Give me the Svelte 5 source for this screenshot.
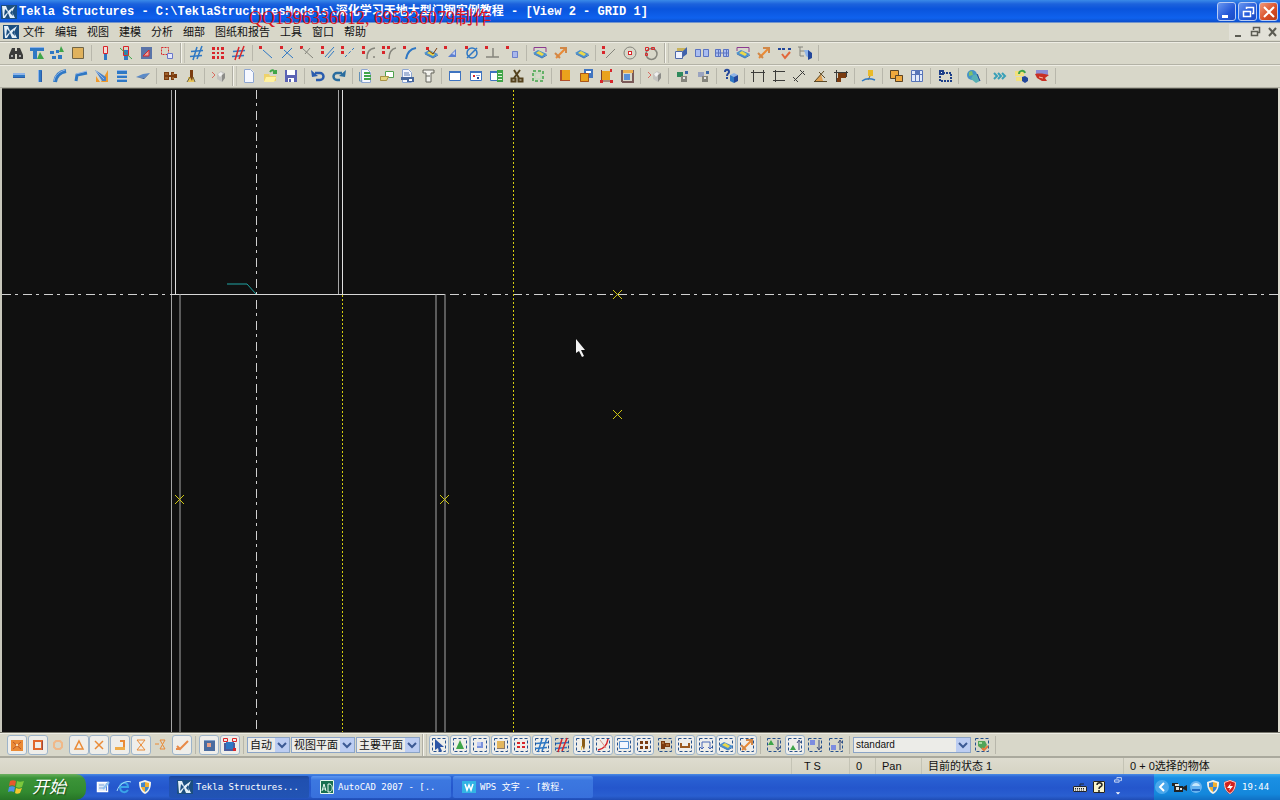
<script>
  // Model editor main window: title bar, menus, icon toolbars, drawing canvas,
  // selection bar, status line and the desktop task bar below.

  const BLUE = "#2f78c4";
  const NAVY = "#23479a";
  const SKY = "#8fb4e8";
  const RED = "#d8262b";
  const ORANGE = "#ea8a35";
  const BROWN = "#7a3c10";
  const GREEN = "#3fa548";
  const GREY = "#85857c";
  const DARK = "#3c3c3a";
  const YELLOW = "#ecd84a";

  // One shape is { d, fill } or { d, stroke, w, dash }, on a 16x16 grid.
  const f = (fill, d) => ({ d, fill });
  const s = (stroke, d, w = 1, dash = null) => ({ d, stroke, w, dash });

  const twoDots = f(RED, "M1 1h3v3H1zM1 6h3v3H1z");
  const oneDot = f(RED, "M1 1h3v3H1z");
  const plane = [f("#4a90d0", "M1 8l5-3 9 4-5 4z"), f(YELLOW, "M4 8l3-2 5 3-2 2z"), s("#3c78b8", "M2 9l8 4 5-3", 1)];
  const hammer = [s(ORANGE, "M3 13L12 4", 2), s("#d08848", "M7 3h6v5M2 8l5 5", 2)];
  const grid = (c) => [s(BLUE, "M2 6.5l12-1M1 11.5l12-1", 1.5), s(c, "M8 2L4 15M13 1L8 14", 1.5)];
  const page = [f("#f6f8ff", "M3 1h7l3 3v11H3z"), s("#8ea6d0", "M3.5 1.5h6l3 3v10h-9z")];
  const windowBox = [f("#fff", "M2 3h12v10H2z"), s("#3f74c0", "M2.5 3.5h11v9h-11z"), f("#3f74c0", "M2 3h12v2H2z")];
  const gear = [f("#c4c4c0", "M6 6l4-3 4 2v5l-3 4-5-3z"), f("#f0f0ee", "M7 6l3-2 2 2-3 3z"), f("#8c8c88", "M11 7l3-2v5l-3 4z"), s("#d86a60", "M1 4l3 3-3 3")];
  const nuts = (c) => [f(c, "M3 4h6v5H3z"), f(GREY, "M7 8h6v6H7z"), f("#3c68a8", "M11 3h3v3h-3z"), f("#e8e8e8", "M9 9h2v2H9z")];
  const frame = s("#24518e", "M1.5 1.5h13v13h-13z", 1, "3 2");
  const arrow = (up) => s("#3c4c7c", up ? "M12 13V4M10 6l2-3 2 3" : "M12 3v9M10 10l2 3 2-3");

  const icons = {
    binoculars: [f(DARK, "M4 3h3v3h2V3h3l3 7v4H9V9H7v5H1v-4z"), f("#aaa", "M3 10h2v2H3zM11 10h2v2h-2z")],
    beams: [f(BLUE, "M1 2h14v4H1zM4 6h4v8H4z"), f(SKY, "M1 2h14v1H1z"), f(GREEN, "M11 7l4 7H8z")],
    bolts: [f(BLUE, "M1 6h4v3H1zM7 5h3v3H7zM3 11h4v3H3zM9 10h4v4H9z"), f(GREEN, "M12 1l3 6H10z")],
    panel: [f("#e0b25c", "M2 2h11v11H2z"), s("#6f6446", "M2.5 2.5h11v11h-11z")],
    column: [f("#f4dcd8", "M6 1h4v8H6z"), s(RED, "M6.5 1.5h4v7h-4z"), f(BLUE, "M7 9h3v6H7z")],
    columnCut: [f(BLUE, "M6 5h4v10H6z"), s(RED, "M5.5 1.5h5v9h-5z"), s(GREEN, "M2 3l12 11", 1)],
    ramp: [f("#5a74a8", "M3 2h11v12H3z"), f("#e8a098", "M5 11l6-6v6z"), s(RED, "M5 11l6-6v6z")],
    fit: [s(RED, "M2.5 2.5h7v7h-7z", 1, "2 1"), f("#e4e6fa", "M8 8h6v5H8z"), s("#6a78c8", "M8.5 8.5h5v5h-5z")],
    grid: grid(BLUE),
    gridRed: grid(RED),
    nine: [f(RED, "M2 2h3v3H2zM7 2h2v3H7zM11 2h3v3h-3zM2 7h3v2H2zM7 7h2v2H7zM11 7h3v2h-3zM2 11h3v3H2zM7 11h2v3H7zM11 11h3v3h-3z")],
    pLine: [oneDot, s(BLUE, "M5 5l9 8", 1)],
    pCross: [oneDot, s(BLUE, "M3 13L13 3M5 5l9 8")],
    pMid: [oneDot, s(GREY, "M3 3l11 10M11 3l-5 6")],
    pDouble: [twoDots, s(BLUE, "M5 12l9-10M8 13l6-7")],
    pDash: [twoDots, s(BLUE, "M5 12l9-9", 1, "3 2")],
    pArc: [twoDots, s(GREY, "M14 3C8 4 6 7 6 14M12 12h2", 1.5)],
    pArcs: [twoDots, f(RED, "M6 1h3v3H6z"), s(GREY, "M15 3C10 4 8 8 8 14", 1.5)],
    pCurve: [oneDot, s(BLUE, "M14 3C8 4 5 8 4 14", 2)],
    pPlane: [...plane, f(RED, "M3 2h3v3H3z"), s(BROWN, "M5 5l5 4 4-6")],
    pTri: [oneDot, f("#5c7fd0", "M5 12l8-8v8z"), f("#c4d0f4", "M9 9l3-3v4z")],
    pCircle: [s(BLUE, "M3 8a5 5 0 1 0 10 0a5 5 0 1 0-10 0M3 13L13 3", 1.5), oneDot],
    pAngle: [s(GREY, "M9 3v9M2 12h13", 1.5), oneDot],
    pCube: [oneDot, f("#a9b7ec", "M7 6h6v7H7z"), s("#6d80c8", "M7.5 6.5h5v6h-5z")],
    planeTop: [...plane, s("#8c3a90", "M2 6V2.5h12V7")],
    hammer,
    plane,
    dotLine: [twoDots, s(GREY, "M5 13L14 4")],
    target: [s(GREY, "M2 8a6 6 0 1 0 12 0a6 6 0 1 0-12 0", 1), f(RED, "M6 6h4v4H6z"), f("#fff", "M7 7h2v2H7z")],
    circle: [s(GREY, "M3 9a5 5 0 1 0 11 0a5 5 0 1 0-11 0", 1.5), s(RED, "M2.5 2.5h3v3h-3zM8.5 2.5h3v2h-3zM2.5 8.5h2v2h-2z")],
    box3d: [f("#eef2ff", "M2 6h7v8H2z"), s("#4d68a8", "M2.5 6.5h7v7h-7z"), f("#c8b35c", "M4 3h10l-3 3H4z"), f("#3f62ac", "M10 6l4-4v7l-4 3z")],
    panes: [f("#a9bdf0", "M1 4h6v8H1zM9 4h6v8H9z"), s("#5c74c0", "M1.5 4.5h5v7h-5zM9.5 4.5h5v7h-5z")],
    panes4: [f("#a9bdf0", "M1 4h6v8H1zM9 4h6v8H9z"), s("#5c74c0", "M1.5 4.5h5v7h-5zM9.5 4.5h5v7h-5zM1 8h14M4.5 4v8M12.5 4v8")],
    check: [f(NAVY, "M2 3h3v2H2zM6 3h3v2H6zM12 3h3v2h-3z"), s("#e2683c", "M6 9l3 4 5-6", 2)],
    tree: [s(GREY, "M3 2v9h4M3 6h6M1 2h5"), f(SKY, "M7 5h5v8l-3-2z"), f(NAVY, "M11 5l4 3v5l-4 2z")],

    beam: [f(BLUE, "M2 6h12v4H2z"), f(SKY, "M2 5h12v2H2z"), f("#2a5ca8", "M2 9h12v1H2z")],
    post: [f(BLUE, "M6 2h4v12H6z"), f(SKY, "M6 2h1v12H6z"), f("#2a5ca8", "M9 3h1v11H9z")],
    curved: [s(BLUE, "M3 14C4 7 8 4 14 3", 4), s(SKY, "M2 13C3 7 7 4 13 2", 1)],
    poly: [s(BLUE, "M3 13l1-6 10-2", 3), s(SKY, "M3 6l11-3", 1)],
    plateOr: [f("#ef9a2c", "M7 14L14 2v12zM2 8l4 6H2z"), f("#4b82c8", "M1 2l5 3 6 4v4H8z"), s(SKY, "M2 3l8 8", 1)],
    stack: [f(BLUE, "M3 2h10v4H3zM3 7h10v3H3zM3 11h10v3H3z"), s(SKY, "M3 2.5h10M3 7.5h10M3 11.5h10")],
    slab: [f("#5a8ac8", "M1 9l7-3 7-1-6 5z"), f("#2c5090", "M1 9l8 1 6-5-6 6z")],
    bolt: [f(BROWN, "M2 4h5v8H2zM9 4h3v8H9zM7 7h2v2H7zM12 6h3v4h-3z"), s("#c88a4c", "M3 6h3M3 10h3M10 6h2M10 10h2")],
    weld: [f("#e8c65a", "M5 9h6v5H5z"), f(BROWN, "M7 2h3v7l-1 4-2-4z"), s("#6b6040", "M4 14l3-5M12 14l-2-5")],
    gear,
    pageNew: page,
    open: [f("#eed26c", "M2 6h5l1 2h6v5H2z"), f("#fff2a0", "M4 9h10l-2 5H2z"), s(GREEN, "M8 4c2-3 4-2 5 1M11 5h3V2", 2)],
    save: [f("#5b63b4", "M2 2h12v12H2z"), f("#fff", "M4 2h8v5H4zM5 10h6v4H5z"), f("#5b63b4", "M6 11h2v3H6z")],
    undo: [s("#2a5cae", "M5 5h5a3 3 0 0 1 0 7H6", 2.5), f("#2a5cae", "M1 2l1 7 6-1z")],
    redo: [s("#2a6c9e", "M11 5H6a3 3 0 0 0 0 7h3", 2.5), f("#2a6c9e", "M15 2l-1 7-6-1z")],
    report: [...page, s(GREEN, "M6 5h6M6 8h7M6 11h7", 2), s("#6290b8", "M1.5 4v9h3")],
    folder: [f("#fff", "M6 3h9v6H6z"), s("#4fa04d", "M6.5 3.5h8v6h-8z"), f("#e5d47c", "M1 8h9l-2 5H1z"), s("#a89348", "M1.5 8.5h8l-2 4h-6z")],
    print: [...page, s("#5a7ab0", "M5 5h5M5 7h6"), f("#48689c", "M2 9h8v3H2zM8 9h7v5H8z"), f("#fff", "M10 11h3v2h-3z")],
    scroll: [f("#f3f3ee", "M4 2h10l-3 3v9H6V6H3z"), s("#66665e", "M3 5V2h11v3h-3v9H6V5zM6 8h4")],
    win1: windowBox,
    win2: [...windowBox, f(RED, "M5 7h2v2H5z"), f(NAVY, "M9 9h2v2H9z"), s("#8fa8d8", "M8 7.5h4")],
    win3: [...windowBox, f(GREEN, "M9 2h6v12H9z"), s("#e4f4dc", "M10 5.5h4M10 8.5h4M10 11.5h4")],
    cut: [s("#55421c", "M5 2l5 8M11 2L5 10", 2), s("#55421c", "M2.5 10.5h4v3h-4zM9.5 10.5h4v3h-4z", 2)],
    crop: [s(GREEN, "M3 3h10v10H3z", 1.5, "3 2"), s("#b4dcb0", "M5 5h6v6H5z")],
    sq1: [f("#eaa21c", "M3 2h10v11H3z"), f("#b0502c", "M3 2h2v11H3zM3 12h10v1H3z")],
    sq2: [f("#3f74c0", "M6 1h9v9H6z"), f("#eaa21c", "M2 5h9v9H2z"), s("#a8581c", "M2.5 5.5h8v8h-8z"), f("#fff", "M8 3h5v2H8z")],
    sq3: [f("#eaa21c", "M4 3h8v9H4z"), s("#7c4030", "M3.5 2v11h10"), f(RED, "M2 12h3v3H2zM12 12h3v3h-3zM12 1h2v3h-2z")],
    sq4: [s("#7a5a58", "M3 14V3h11v11H3", 2), f("#ecb050", "M4 2h10v3H4z"), f("#5a90d8", "M5 6h6v6H5z")],
    nuts1: nuts("#2f8a5c"),
    nuts2: nuts("#9aa4c0"),
    help: [s(NAVY, "M2 4c0-3 4-3 4 0c0 2-2 1-2 4M4 9v2", 2), f(SKY, "M7 7l4-2 4 2-4 2z"), f(BLUE, "M7 7l4 2v6l-4-2z"), f(NAVY, "M11 9l4-2v6l-4 2z")],
    dimH: [s(DARK, "M3.5 2v12M13.5 2v12M1 4.5h14")],
    dimV: [s(DARK, "M2 3.5h12M2 12.5h12M4.5 2v12")],
    dimD: [s(DARK, "M3 13L13 3M2 9l5 5M9 2l5 5")],
    dimA: [f("#e0a050", "M3 13l6-7 2 7z"), s("#5b4a28", "M2 13.5h13M3 13l9-10M7 4l6 6")],
    dimC: [f(BROWN, "M5 5h8v5H5zM4 10h4v4H4z"), s(DARK, "M3.5 2v12M1 4.5h14M13.5 3v6")],
    pin: [f("#eaba28", "M7 2h5v6H7z"), s("#8a6d20", "M9 8l-2 4"), s(BLUE, "M1 13c4-3 8-3 13-1", 1.5)],
    copy: [f("#f0a83c", "M2 2h8v8H2z"), s("#5a4528", "M2.5 2.5h8v8h-8z"), f("#f0a83c", "M7 7h8v7H7z"), s("#5a4528", "M7.5 7.5h7v6h-7z")],
    table: [f("#dfe8fa", "M2 2h12v12H2z"), s("#5674b8", "M2.5 2.5h11v11h-11zM2 6.5h12M6.5 2v12M10.5 2v12"), f("#5674b8", "M7 2h4v4H7z")],
    marquee: [s("#1d3f88", "M3 5h11v8H3z", 2, "2 1"), f("#1d3f88", "M2 2h5v5H2z"), f("#fff", "M4 4h1v1H4z")],
    globe: [f("#4594c8", "M2 7a5 5 0 1 1 10 0a5 5 0 1 1-10 0"), f("#7fc06a", "M4 4l3-1 1 4-4 1z"), f("#58b0b4", "M8 7l5-1 2 7-4 2-5-4z"), s(NAVY, "M12 6l3 7", 1)],
    chevrons: [s("#39a0b8", "M2 5l3 3-3 3M6 5l3 3-3 3M10 5l3 3-3 3", 2)],
    export: [f("#f2e07c", "M2 3h9v5H2zM3 9h6v4H3z"), s(GREEN, "M6 6c0-4 5-4 6-1", 2), f(NAVY, "M9 9l3-1 3 2v3l-3 2-3-2z")],
    flag: [f("#8d8ed4", "M2 2h12v5H2z"), f("#c83024", "M1 6c5-1 10 0 14 1l-4 3 2 3H8L3 10z"), s("#f4c0b0", "M5 9l4 1")],

    snapAll: [f(ORANGE, "M2 3h12v11H2z"), s("#b8582c", "M4 5l8 7M12 5l-8 7"), f("#f8d8b0", "M7 7h2v2H7z")],
    snapEnd: [s("#e2672c", "M4 4h8v8H4z", 2), s("#9c4a40", "M12.5 4v9")],
    snapOct: [s("#f0b888", "M6 4h4l2 2v4l-2 2H6l-2-2V6z", 2)],
    snapTri: [s(ORANGE, "M8 4l4 8H4z", 1.5)],
    snapX: [s(ORANGE, "M4 4l8 8M12 4l-8 8", 1.5)],
    snapPerp: [s(ORANGE, "M8 4h4v8", 2), f("#f0ac48", "M3 10h10v3H3z")],
    snapHour: [s(ORANGE, "M4 3h8l-8 10h8L4 3z", 1)],
    snapNear: [s(ORANGE, "M7 3h5L7 12h5L7 3zM2 7h4", 1)],
    snapCheck: [s("#e88a48", "M3 9l3 3 8-8M2 12h4", 2)],
    snapRef: [f("#4a6ca0", "M3 3h11v11H3z"), f("#86a4cc", "M3 3h11v1H3z"), f("#e8a088", "M6 6h4v4H6z")],
    snapGeo: [f(BLUE, "M4 5h8v7H4z"), s(RED, "M1.5 1.5h4v3h-4zM10.5 1.5h4v3h-4z"), s("#4a5c9c", "M3 6v7h9V6", 2), f(RED, "M11 11h3v3h-3z")],

    selArrow: [frame, f("#2d55a5", "M4 2l9 8H9l2 4-3 1-1-4-3 2z")],
    selComp: [frame, f(GREEN, "M8 3l4 9H4z")],
    selPart: [frame, f("#7b92dc", "M5 5h6v6H5z"), f("#bcc8f4", "M5 5h4v4H5z")],
    selSurf: [frame, f("#e3b65c", "M4 4h8v8H4z"), s("#8c7868", "M4 11.5h8M11.5 4v8", 1)],
    selPts: [frame, f(RED, "M4 5h3v2H4zM9 5h3v2H9zM4 9h3v2H4zM9 9h3v2H9z")],
    selGrid: [frame, ...grid(BLUE)],
    selLine: [frame, ...grid(RED)],
    selWeld: [frame, f("#8a5c18", "M7 2h3v7l-1 4-2-4z"), f("#e8c65a", "M6 9h1v4H6z")],
    selCut: [frame, s(RED, "M3 13C9 12 12 8 13 2", 1.5), s("#d89080", "M5 3l6 8", 1)],
    selView: [frame, s("#5690d0", "M3.5 4.5h9v7h-9z"), f("#f4f8ff", "M4 5h8v6H4z")],
    selBolts: [frame, f(BROWN, "M4 4h3v3H4zM9 4h3v3H9zM4 9h3v3H4zM9 9h3v3H9z")],
    selBolt: [frame, f(BROWN, "M4 4h4v8H4zM8 6h5v4H8z"), s("#d8a060", "M5 6h2M9 8h3")],
    selBar: [frame, s("#9c5a20", "M4 6v4h8V6", 2)],
    selRebar: [frame, s("#4a68b8", "M4 12V5h8v7M2 10l2 2 2-2M10 10l2 2 2-2")],
    selPlane: [frame, ...plane],
    selDist: [frame, ...hammer],
    asm1: [frame, f(GREEN, "M5 3l3 5H2z"), arrow(false)],
    asm2: [frame, f(GREEN, "M6 8l3 5H3z"), arrow(true)],
    asm3: [frame, f("#7d8ce0", "M3 3h5v5H3z"), arrow(false)],
    asm4: [frame, f("#7d8ce0", "M3 8h5v5H3z"), arrow(true)],
    filter: [frame, f("#52a458", "M4 4h7l2 4-4 5-5-4z"), f("#a8dca0", "M5 5h3v2H5z"), s("#e8783c", "M8 11l2 2 4-4", 2)],

    logo: [f("#1c4f80", "M0 1h16v14H0z"), f("#e4f0f8", "M1 2h4l2 5 7-5-3 6 3 6H9L7 9l-3 5H2z"), f("#1c4f80", "M4 5l3 3-4 4zM11 6l1 6-3-3z")],
    desk: [f("#dfe9f7", "M2 4h9v9H2z"), s("#7fa6dc", "M4 6h5M4 9h4"), s("#fff", "M2.5 3.5h10v9h-10z", 1.5), s("#8cc0f0", "M8 10l6-7", 2)],
    ie: [s("#3aa4e8", "M12 11c-3 4-8 2-8-3s8-6 8 0H5", 2), s("#a8dcf8", "M1 12C3 5 10 1 15 3")],
    shield: [f("#f2f2ec", "M8 1l6 2c0 6-2 10-6 12C4 13 2 9 2 3z"), f("#3c84cc", "M8 3v5H4V4zM8 8h4c-1 3-2 4-4 5z"), f("#f0b030", "M8 3l4 1v4H8zM4 8h4v5C6 12 5 10 4 8z")],
    cad: [f("#187050", "M1 1h14v14H1z"), s("#e8f8f0", "M3 12l2-7 2 7M4 10h3M9 5v8h2c3-1 3-7 0-8z", 1), s("#e8f8f0", "M1.5 1.5h13v13h-13z")],
    wps: [f("#32b4e4", "M1 2h14v12H1z"), s("#fff", "M4 5l2 6 2-5 2 5 2-6", 1.5)],
    keyboard: [f("#e8e6da", "M1 7h14v6H1z"), s("#20242c", "M1.5 7.5h13v5h-13zM8 7V5h4", 1), s("#20242c", "M3 9.5h10M3 11h10", 1, "1 1")],
    question: [f("#f8f4cc", "M2 2h12v12H2z"), s("#222", "M2.5 2.5h11v11h-11z"), s("#222", "M6 6c0-3 5-3 5 0c0 2-3 1-3 4M8 11v2", 1.5)],
    back: [f("#4aa8ec", "M1 8a7 7 0 1 1 14 0a7 7 0 1 1-14 0"), s("#fff", "M10 4L6 8l4 4", 2)],
    camera: [f("#222", "M1 4h6v3H1zM3 7h9v6H3zM12 8l4-2v6l-4-2z"), f("#e4e4dc", "M4 5h4v2H4zM5 8h3v3H5zM9 9h2v2H9z")],
    orb: [f("#68b4f0", "M2 8a6 6 0 1 1 12 0a6 6 0 1 1-12 0"), f("#c8e8fc", "M4 7c1-4 7-4 8 0z"), f("#1f68c0", "M4 10h8v2H4z")],
    redShield: [f("#d4201c", "M8 1l6 2c0 6-2 10-6 12C4 13 2 9 2 3z"), s("#f4d8d4", "M8 1.5l5.5 2c0 5-2 9-5.5 11C4 12 2.5 9 2.5 3.500z"), f("#fff", "M9 4L5 9h3l-1 3 4-5H8z")],
    minimize: [f("#fff", "M3 11h6v3H3z")],
    restore: [s("#fff", "M6.5 5V3.5h7v6H12M3.5 7.5h7v5h-7z", 1.5)],
    close: [s("#fff", "M3 3l10 10M13 3L3 13", 2)],
    mdiMin: [f("#5c5c54", "M5 11h6v2H5z")],
    mdiRestore: [s("#5c5c54", "M6.5 6V3.5h6v5H11M4.5 7.5h6v4h-6z", 1.5)],
    mdiClose: [s("#5c5c54", "M5 4l7 8M12 4l-7 8", 2)],
    smallRestore: [s("#fff", "M6.5 5V3.5h6v4H11M3.5 6.5h6v3h-6z")],
    smallDown: [f("#fff", "M5 7h6l-3 3z")],
    chevron: [s("#3c5a94", "M4 6l4 4 4-4", 2)]
  };

  const menus = ["文件", "编辑", "视图", "建模", "分析", "细部", "图纸和报告", "工具", "窗口", "帮助"];

  // "grip" marks a group that starts a separate, draggable toolbar.
  const modelBar = [
    { names: "binoculars beams bolts panel" },
    { names: "column columnCut ramp fit" },
    { grip: true, names: "grid nine gridRed" },
    { names: "pLine pCross pMid pDouble pDash pArc pArcs pCurve pPlane pTri pCircle pAngle pCube" },
    { names: "planeTop hammer plane" },
    { names: "dotLine target circle" },
    { grip: true, names: "box3d panes panes4 planeTop hammer check tree" }
  ];
  const editBar = [
    { names: "beam post curved poly plateOr stack slab" },
    { names: "bolt weld" },
    { names: "gear" },
    { grip: true, names: "pageNew open save" },
    { names: "undo redo" },
    { names: "report folder print scroll" },
    { names: "win1 win2 win3 cut crop" },
    { names: "sq1 sq2 sq3 sq4" },
    { names: "gear" },
    { names: "nuts1 nuts2" },
    { names: "help" },
    { names: "dimH dimV dimD dimA dimC" },
    { names: "pin" },
    { names: "copy table" },
    { names: "marquee" },
    { names: "globe" },
    { names: "chevrons export flag" }
  ];
  const snapBar = "snapAll snapEnd snapOct snapTri snapX snapPerp snapHour snapNear snapCheck";
  const refBar = "snapRef snapGeo";
  const selectBar =
    "selArrow selComp selPart selSurf selPts selGrid selLine selWeld selCut selView selBolts selBolt selBar selRebar selPlane selDist";
  const asmBar = "asm1 asm2 asm3 asm4";

  let pressed = $state(
    new Set([
      ...snapBar.split(" ").filter((n) => n !== "snapOct" && n !== "snapNear"),
      ...refBar.split(" "),
      ...selectBar.split(" ").filter((n) => n !== "selLine" && n !== "selBolt"),
      "asm2"
    ])
  );
  function toggle(name) {
    const next = new Set(pressed);
    if (!next.delete(name)) next.add(name);
    pressed = next;
  }

  const marks = [[617, 206], [617, 326], [179, 411], [444, 411]];
  const tasks = [
    { icon: "logo", label: "Tekla Structures...", active: true },
    { icon: "cad", label: "AutoCAD 2007 - [.." },
    { icon: "wps", label: "WPS 文字 - [教程." }
  ];

  const groupWidth = (n) => Math.round(n * 20.5);
</script>

{#snippet icon(name)}
  <svg class="icon" width="16" height="16" viewBox="0 0 16 16" aria-hidden="true">
    {#each icons[name] as p, i (i)}
      <path d={p.d} fill={p.fill ?? "none"} stroke={p.stroke} stroke-width={p.w} stroke-dasharray={p.dash} />
    {/each}
  </svg>
{/snippet}

{#snippet group(names)}
  {@const list = names.split(" ")}
  <div class="group" style="width:{groupWidth(list.length)}px">
    {#each list as name (name)}
      <button class="tool" aria-label={name}>{@render icon(name)}</button>
    {/each}
  </div>
{/snippet}

{#snippet toggles(names)}
  {@const list = names.split(" ")}
  <div class="group" style="width:{groupWidth(list.length)}px">
    {#each list as name (name)}
      <button class="tool" class:on={pressed.has(name)} aria-label={name} aria-pressed={pressed.has(name)} onclick={() => toggle(name)}>
        {@render icon(name)}
      </button>
    {/each}
  </div>
{/snippet}

{#snippet toolbar(groups, kind)}
  <div class="toolbar {kind}">
    {#each groups as g, i (i)}
      {#if i > 0}<span class={g.grip ? "sep grip" : "sep"}></span>{/if}
      {@render group(g.names)}
    {/each}
    <span class="sep"></span>
  </div>
{/snippet}

{#snippet picker(label, value, size)}
  <span class="picker {size}">
    <select aria-label={label}><option>{value}</option></select>
    <span class="drop">{@render icon("chevron")}</span>
  </span>
{/snippet}

<div class="app">
  <header class="title">
    {@render icon("logo")}
    <h1>Tekla Structures - C:\TeklaStructuresModels\深化学习天地大型门钢实例教程 - [View 2 - GRID 1]</h1>
    <div class="watermark">QQ1396336012, 695336079制作</div>
    <div class="controls">
      <button aria-label="Minimize">{@render icon("minimize")}</button>
      <button aria-label="Restore">{@render icon("restore")}</button>
      <button class="close" aria-label="Close">{@render icon("close")}</button>
    </div>
  </header>

  <nav class="menu">
    {@render icon("logo")}
    {#each menus as m (m)}
      <button class="item">{m}</button>
    {/each}
    <div class="mdi">
      <button aria-label="Minimize view">{@render icon("mdiMin")}</button>
      <button aria-label="Restore view">{@render icon("mdiRestore")}</button>
      <button aria-label="Close view">{@render icon("mdiClose")}</button>
    </div>
  </nav>

  {@render toolbar(modelBar, "model")}
  {@render toolbar(editBar, "edit")}

  <main class="canvas">
    <svg role="img" aria-label="GRID 1">
      <!-- grid axes -->
      <line class="axis" x1="2" y1="206.5" x2="171" y2="206.5" />
      <line class="axis" x1="450" y1="206.5" x2="100%" y2="206.5" />
      <line class="axis" x1="256.5" y1="2" x2="256.5" y2="100%" />
      <line class="limit" x1="513.5" y1="2" x2="513.5" y2="100%" />
      <line class="limit" x1="342.5" y1="207" x2="342.5" y2="100%" />
      <!-- upper column -->
      <line class="edge soft" x1="171.5" y1="2" x2="171.5" y2="100%" />
      <line class="edge" x1="175.5" y1="2" x2="175.5" y2="206" />
      <line class="edge soft" x1="338.5" y1="2" x2="338.5" y2="206" />
      <line class="edge" x1="342.5" y1="2" x2="342.5" y2="206" />
      <!-- lower column -->
      <rect class="cap" x="171" y="206" width="274" height="1" />
      <line class="edge soft" x1="180" y1="206" x2="180" y2="100%" />
      <line class="edge soft" x1="436" y1="206" x2="436" y2="100%" />
      <line class="edge soft" x1="445" y1="206" x2="445" y2="100%" />
      <path class="handle" d="M227 196H247L256 206" />
      {#each marks as [x, y] (`${x},${y}`)}
        <path class="mark" d="M{x - 4} {y - 4}l9 9m0 -9l-9 9" />
      {/each}
      <path class="cursor" d="M576 251v14l3-2 3 6 2-1-3-6h4z" />
    </svg>
  </main>

  <div class="toolbar bottom">
    {@render toggles(snapBar)}
    <span class="sep"></span>
    {@render toggles(refBar)}
    <span class="sep"></span>
    <div class="pickers">
      {@render picker("Plane type", "自动", "small")}
      {@render picker("Plane", "视图平面", "medium")}
      {@render picker("Depth", "主要平面", "medium")}
    </div>
    <span class="sep grip"></span>
    {@render toggles(selectBar)}
    <span class="sep"></span>
    {@render toggles(asmBar)}
    <span class="sep"></span>
    {@render picker("Selection filter", "standard", "large")}
    {@render toggles("filter")}
    <span class="sep"></span>
  </div>

  <footer class="status">
    <span class="cell keys">T S</span>
    <span class="cell level">0</span>
    <span class="cell mode">Pan</span>
    <span class="cell phase">目前的状态 1</span>
    <span class="cell picked">0 + 0选择的物体</span>
  </footer>

  <div class="taskbar">
    <button class="start">
      <svg width="20" height="18" viewBox="0 0 20 18" aria-hidden="true">
        <path d="M3 3c2-1 4-1 6 0L8 8C6 7 4 7 2 8z" fill="#e8582c" />
        <path d="M10 3c2 1 4 1 7 0l-2 6c-2 1-4 1-6 0z" fill="#7cc83c" />
        <path d="M2 9c2-1 4-1 6 0l-1 5c-2-1-4-1-6 0z" fill="#4c90e8" />
        <path d="M9 10c2 1 4 1 6 0l-2 5c-2 1-4 1-5 0z" fill="#f4c82c" />
      </svg>
      <span>开始</span>
    </button>
    <div class="quick">
      <button aria-label="Desktop">{@render icon("desk")}</button>
      <button aria-label="Browser">{@render icon("ie")}</button>
      <button aria-label="Security">{@render icon("shield")}</button>
    </div>
    <div class="tasks">
      {#each tasks as t (t.label)}
        <button class="task" class:active={t.active}>{@render icon(t.icon)}<span>{t.label}</span></button>
      {/each}
    </div>
    <div class="lang">
      {@render icon("keyboard")}
      {@render icon("question")}
      <span class="stacked">{@render icon("smallRestore")}{@render icon("smallDown")}</span>
    </div>
    <div class="tray">
      {@render icon("back")}
      {@render icon("camera")}
      {@render icon("orb")}
      {@render icon("shield")}
      {@render icon("redShield")}
      <time>19:44</time>
    </div>
  </div>
</div>

<style>
  :global(body) {
    margin: 0;
    background: #111;
  }
  .app {
    display: flex;
    flex-direction: column;
    min-height: 100vh;
    background: #d8d7c9;
    color: #111;
    font: 11px / 14px "Liberation Sans", "Noto Sans CJK SC", sans-serif;
  }
  button {
    display: flex;
    align-items: center;
    justify-content: center;
    padding: 0;
    border: 0;
    background: none;
    color: inherit;
    font: inherit;
  }
  .icon {
    flex: none;
    display: block;
  }

  .title {
    position: relative;
    display: flex;
    align-items: center;
    height: 23px;
    padding: 0 2px 0 1px;
    box-sizing: border-box;
    background: linear-gradient(#3a8ae8 0, #1c62dc 4px, #0a54dc 9px, #0f62ee 18px, #0b4ecc 22px, #dcdccc 23px);
    color: #fff;
  }
  .title h1 {
    flex: 1;
    min-width: 0;
    margin: 0 0 0 2px;
    overflow: hidden;
    font: bold 12px / 16px "Liberation Mono", "Noto Sans CJK SC", monospace;
    white-space: pre;
  }
  /* lies over the title and the menu bar */
  .watermark {
    position: absolute;
    left: 249px;
    top: 8px;
    z-index: 2;
    color: #dc1420;
    font: 18px / 20px "Liberation Serif", "Noto Sans CJK SC", serif;
    white-space: nowrap;
    pointer-events: none;
  }
  .controls {
    display: flex;
    gap: 2px;
  }
  .controls button {
    width: 19px;
    height: 19px;
    border: 1px solid #b8ccf4;
    border-radius: 3px;
    background: linear-gradient(135deg, #6a98f0, #2458d8 60%, #1c4cc4);
  }
  .controls .close {
    background: linear-gradient(135deg, #f09a7c, #d84c24 60%, #b83c18);
  }

  .menu {
    display: flex;
    align-items: center;
    gap: 10px;
    height: 18px;
    padding: 0 0 0 3px;
    border-bottom: 1px solid #a3a398;
  }
  .menu > .icon {
    margin-right: -6px;
  }
  .menu .item {
    line-height: 18px;
    white-space: nowrap;
  }
  .mdi {
    display: flex;
    margin-left: auto;
  }
  .mdi button {
    width: 17px;
    height: 16px;
    background: #e2e1d8;
  }

  .toolbar {
    display: flex;
    align-items: center;
    min-height: 23px;
    padding: 0 0 1px 6px;
    border-top: 1px solid #eeede4;
    border-bottom: 1px solid #b3b2a6;
    box-sizing: border-box;
  }
  .toolbar.edit {
    padding-left: 9px;
  }
  .group {
    display: flex;
    justify-content: space-around;
    flex: none;
  }
  .tool {
    width: 20px;
    height: 20px;
  }
  .sep {
    flex: none;
    align-self: stretch;
    box-sizing: border-box;
    width: 4px;
    margin: 2px 0 2px 3px;
    border-left: 1px solid #b8b7ab;
  }
  .sep.grip {
    width: 5px;
    margin: 0 2px 0 3px;
    border-left: 1px solid #b0afa4;
    box-shadow: inset 1px 0 #f4f3ec;
    border-right: 1px solid #c2c1b6;
  }

  .canvas {
    flex: 1;
    display: flex;
    min-height: 200px;
    box-sizing: border-box;
    background: #101010;
    border-bottom: 1px solid #77766c;
    box-shadow: inset 2px 0 #c8c7bb, inset -2px 0 #dedcd0, inset 0 1px #55554c;
  }
  .canvas svg {
    flex: 1;
    display: block;
    width: 100%;
    height: auto;
  }
  .axis {
    stroke: #d0d0d0;
    stroke-dasharray: 9 4 3 5;
  }
  .limit {
    stroke: #d4cc10;
    stroke-dasharray: 2 2;
  }
  .edge {
    stroke: #e0e0e0;
  }
  .edge.soft {
    stroke: #a6a6a6;
  }
  .cap {
    fill: #d8d8d8;
  }
  .handle {
    fill: none;
    stroke: #20a4a4;
  }
  .mark {
    fill: none;
    stroke: #d0c810;
  }
  .cursor {
    fill: #f2f2f2;
  }

  .toolbar.bottom {
    min-height: 25px;
    padding: 0 0 0 7px;
    border-bottom: 2px solid #aaa99d;
  }
  .bottom .tool {
    box-sizing: border-box;
  }
  .bottom .tool.on {
    border: 1px solid #9db4ca;
    border-radius: 3px;
    background: #efeeea;
  }
  .bottom .sep.grip {
    margin: 0 2px;
  }
  .pickers {
    display: flex;
    gap: 1px;
  }
  .picker {
    position: relative;
    display: flex;
  }
  .picker select {
    appearance: none;
    width: 100%;
    height: 16px;
    padding: 0 0 0 2px;
    border: 1px solid #8ba4c6;
    border-radius: 0;
    background: #ecece8;
    color: #111;
    font: 11px / 14px "Liberation Sans", "Noto Sans CJK SC", sans-serif;
  }
  .picker .drop {
    position: absolute;
    right: 1px;
    top: 1px;
    display: flex;
    align-items: center;
    justify-content: center;
    width: 14px;
    height: 14px;
    overflow: hidden;
    background: #bccdf2;
    pointer-events: none;
  }
  .small {
    width: 43px;
  }
  .medium {
    width: 64px;
  }
  .large {
    width: 118px;
  }
  .large select {
    font-size: 10px;
  }

  .status {
    display: flex;
    justify-content: flex-end;
    height: 16px;
    line-height: 16px;
    background: linear-gradient(#dedccf, #d6d4c4);
  }
  .cell {
    box-sizing: border-box;
    padding-left: 6px;
    border-left: 1px solid #c4c3b5;
    white-space: nowrap;
  }
  .keys {
    width: 58px;
    padding-left: 12px;
  }
  .level {
    width: 26px;
  }
  .mode {
    width: 46px;
  }
  .phase {
    width: 202px;
  }
  .picked {
    width: 157px;
  }

  .taskbar {
    display: flex;
    align-items: stretch;
    height: 26px;
    background: linear-gradient(#4a8ae4 0, #2a62d4 3px, #2456cc 14px, #2a5fd0 22px, #1f4cb4);
    color: #fff;
  }
  .start {
    width: 86px;
    justify-content: flex-start;
    padding-left: 7px;
    box-sizing: border-box;
    border-radius: 0 10px 10px 0;
    background: linear-gradient(#6cb060 0, #3c9438 4px, #328a30 18px, #267426);
  }
  .start span {
    margin-left: 5px;
    padding-bottom: 2px;
    font: italic 17px / 22px "Noto Sans CJK SC", sans-serif;
    text-shadow: 1px 1px 1px #1c501c;
  }
  .quick {
    display: flex;
    align-items: center;
    gap: 5px;
    margin: 0 16px 0 9px;
  }
  .tasks {
    display: flex;
    gap: 2px;
    flex: 1;
    min-width: 0;
  }
  .task {
    width: 140px;
    justify-content: flex-start;
    gap: 3px;
    margin: 2px 0;
    padding-left: 8px;
    box-sizing: border-box;
    border-radius: 2px;
    background: linear-gradient(#5c96f0, #3c78e0 4px, #3870dc);
    font: 9px / 16px "DejaVu Sans Mono", "Noto Sans CJK SC", monospace;
    white-space: nowrap;
  }
  .task.active {
    background: linear-gradient(#1c489c, #2050b0 4px, #2254b4);
  }
  .lang {
    display: flex;
    align-items: center;
    gap: 3px;
    margin-right: 28px;
  }
  .stacked {
    display: flex;
    flex-direction: column;
    height: 26px;
    justify-content: center;
  }
  .stacked .icon {
    height: 12px;
  }
  .tray {
    display: flex;
    align-items: center;
    gap: 1px;
    width: 126px;
    box-sizing: border-box;
    background: linear-gradient(#3cb0f0 0, #1a90e4 4px, #1488dc 20px, #1070c4);
  }
  .tray time {
    margin-left: 3px;
    font: 9px / 16px "DejaVu Sans Mono", monospace;
  }
</style>
